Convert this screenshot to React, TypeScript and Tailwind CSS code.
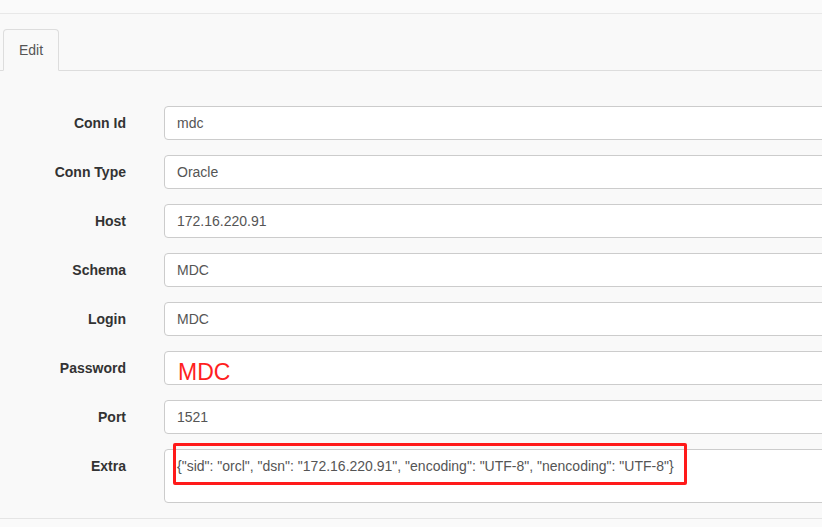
import React from 'react'

const fields = [
  { label: 'Conn Id', value: 'mdc' },
  { label: 'Conn Type', value: 'Oracle' },
  { label: 'Host', value: '172.16.220.91' },
  { label: 'Schema', value: 'MDC' },
  { label: 'Login', value: 'MDC' },
  { label: 'Password', value: '' },
  { label: 'Port', value: '1521' },
]

const extra = '{"sid": "orcl", "dsn": "172.16.220.91", "encoding": "UTF-8", "nencoding": "UTF-8"}'

function FieldRow({ label, value }: { label: string; value: string }) {
  return (
    <div className="mb-[15px] flex items-center">
      <label className="w-[126px] shrink-0 text-right text-[14px] font-bold text-[#333]">{label}</label>
      <div className="relative ml-[38px] h-[34px] w-[700px] shrink-0 rounded-[4px] border border-[#ccc] bg-white px-3 text-[14px] leading-[32px] text-[#555]">
        {value}
        {label === 'Password' ? (
          <span className="absolute left-[13px] top-[9px] text-[23px] leading-[23px] text-[#ff1f1f]">MDC</span>
        ) : null}
      </div>
    </div>
  )
}

export default function App() {
  return (
    <div className="h-[527px] w-[822px] overflow-hidden bg-[#f9f9f9] font-['Liberation_Sans',Arial,sans-serif]">
      <div className="h-[14px] border-b border-[#e8e8e8] bg-[#fafafa]" />
      <div className="mt-[15px] flex border-b border-[#ddd] pl-[3px]">
        <div className="-mb-px rounded-t-[4px] border border-[#ddd] border-b-transparent bg-[#f9f9f9] px-[15px] text-[14px] leading-[40px] text-[#555]">
          Edit
        </div>
      </div>

      <div className="pt-[35px]">
        {fields.map((f) => (
          <FieldRow key={f.label} label={f.label} value={f.value} />
        ))}
        <div className="flex items-start">
          <label className="w-[126px] shrink-0 pt-[7px] text-right text-[14px] font-bold leading-[20px] text-[#333]">Extra</label>
          <div className="relative ml-[38px] h-[54px] w-[700px] shrink-0 rounded-[4px] border border-[#ccc] bg-white px-3 py-[6px] text-[14px] leading-[20px] text-[#555]">
            {extra}
            <div className="absolute left-[8px] top-[-7px] h-[42px] w-[514px] rounded-[2px] border-[3px] border-[#ff1a1a]" />
          </div>
        </div>
      </div>

      <div className="mt-[15px] h-[10px] border-t border-[#e5e5e5] bg-[#fafafa]" />
    </div>
  )
}
